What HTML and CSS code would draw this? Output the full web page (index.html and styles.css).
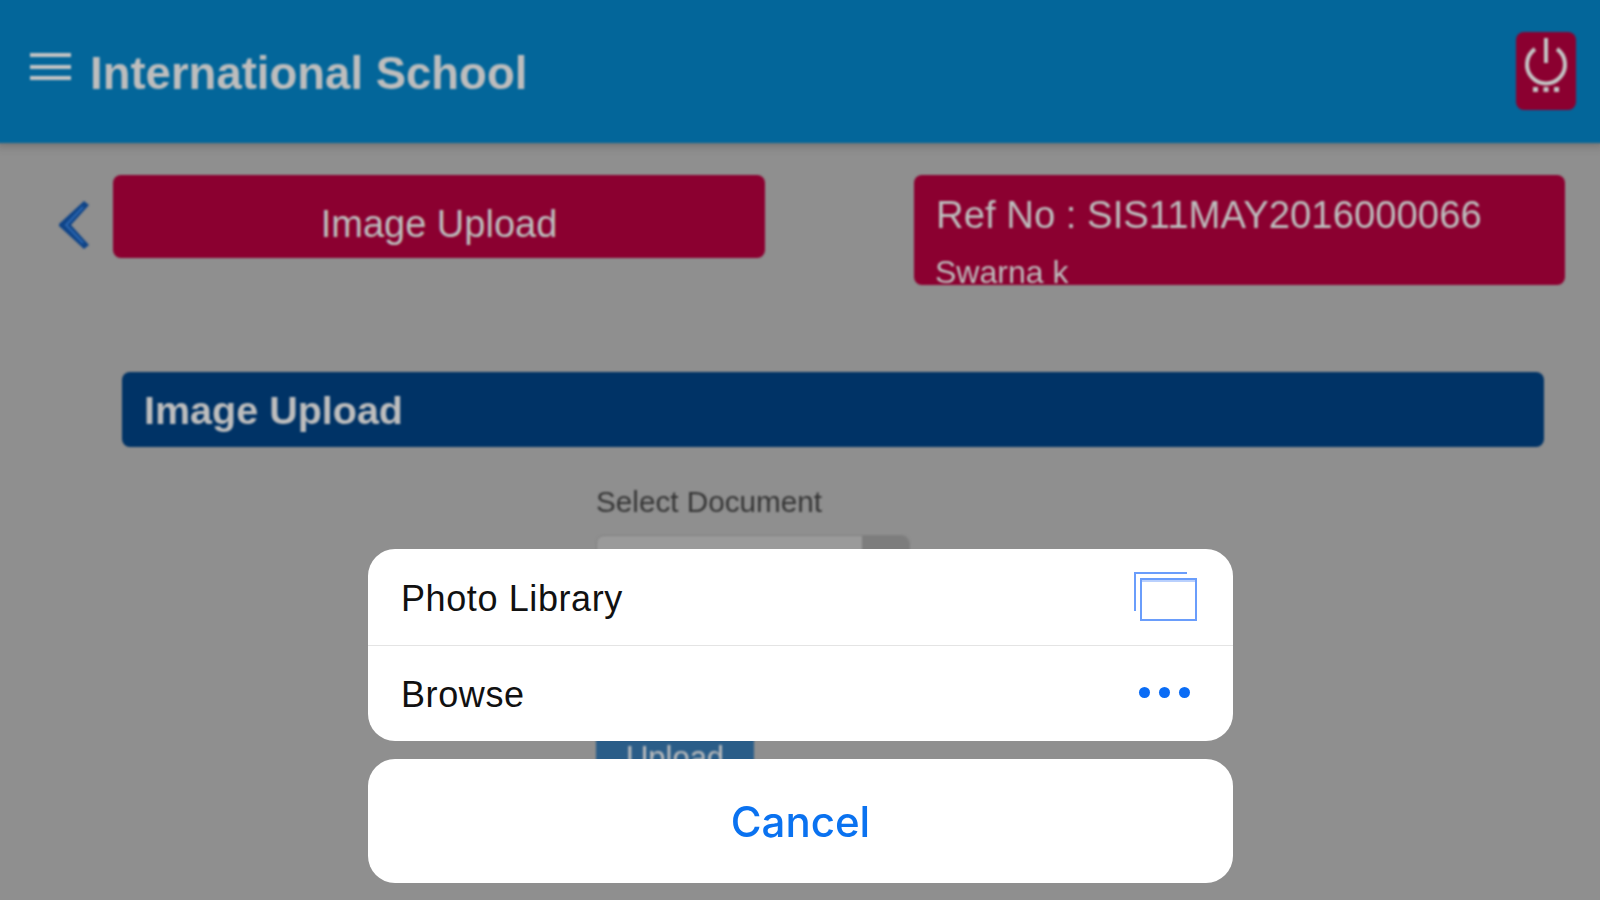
FILE: index.html
```html
<!DOCTYPE html>
<html lang="en">
<head>
  <meta charset="UTF-8">
  <title>International School</title>
  <link rel="stylesheet" href="styles.css">
</head>
<body>

  <div class="page">
    <div class="topbar">
      <div class="menu-icon"><span></span><span></span><span></span></div>
      <div class="app-title">International School</div>
      <div class="power-btn">
        <svg width="60" height="78" viewBox="0 0 60 78">
          <path d="M19 17 A19 19 0 1 0 41 17" fill="none" stroke="#c4c4c4" stroke-width="4"/>
          <path d="M30 6 V31" fill="none" stroke="#c4c4c4" stroke-width="4"/>
          <rect x="17" y="55" width="5" height="5" fill="#c4c4c4"/>
          <rect x="27.5" y="55" width="5" height="5" fill="#c4c4c4"/>
          <rect x="38" y="55" width="5" height="5" fill="#c4c4c4"/>
        </svg>
      </div>
    </div>

    <div class="info-row">
      <svg class="back-icon" width="32" height="50" viewBox="0 0 32 50">
        <path d="M26 1 L31 5 L13 25 L31 45 L26 49 L1 26 L1 24 Z" fill="#0f4488"/>
        <path d="M25 7 L8 25 L25 43" fill="none" stroke="#2c67b0" stroke-width="2"/>
      </svg>
      <div class="page-name">Image Upload</div>
      <div class="ref-box">
        <div class="ref-no">Ref No : SIS11MAY2016000066</div>
        <div class="ref-name">Swarna k</div>
      </div>
    </div>

    <div class="section-bar">Image Upload</div>

    <div class="upload-form">
      <div class="form-label">Select Document</div>
      <div class="select-box"><div class="select-arrow"></div></div>
      <div class="upload-btn">Upload</div>
    </div>
  </div>

  <div class="action-sheet">
    <div class="sheet-group">
      <div class="sheet-row">
        <span>Photo Library</span>
        <svg class="library-icon" width="64" height="52" viewBox="0 0 64 52">
          <path d="M54 3 H2 V41" fill="none" stroke="#6a9dfb" stroke-width="2"/>
          <rect x="8" y="9" width="55" height="41" fill="#fff" stroke="#6a9dfb" stroke-width="2"/>
          <path d="M9 11 H62" fill="none" stroke="#b9d0fd" stroke-width="2"/>
        </svg>
      </div>
      <div class="sheet-row">
        <span>Browse</span>
        <div class="dots"><i></i><i></i><i></i></div>
      </div>
    </div>
    <div class="sheet-cancel">Cancel</div>
  </div>

</body>
</html>
```

FILE: styles.css
```css
html,
body {
  margin: 0;
  height: 100%;
  overflow: hidden;
}

body {
  font-family: "Liberation Sans", Arial, sans-serif;
  background-color: #8f8f8f;
  position: relative;
}

.page {
  filter: blur(1px);
}

/* bleeds past the window so the blur leaves no pale edge */
.topbar {
  height: 147px;
  margin: -4px -4px 0;
  background-color: #03669a;
  display: flex;
  align-items: center;
  padding: 4px 28px 0 34px;
  box-sizing: border-box;
  box-shadow: 0 3px 8px rgba(60, 60, 60, 0.35);
}

.menu-icon {
  width: 41px;
  height: 27px;
  margin-top: -10px;
  margin-right: 19px;
  display: flex;
  flex-direction: column;
  justify-content: space-between;
}

.menu-icon span {
  height: 4px;
  background-color: #c4c4c4;
}

.app-title {
  font-size: 45.5px;
  font-weight: bold;
  color: #bdbdbd;
  flex: 1;
  padding-top: 5px;
}

.power-btn {
  width: 60px;
  height: 78px;
  margin-top: -2px;
  background-color: #8b0030;
  border-radius: 8px;
}

.power-btn svg {
  display: block;
}

.info-row {
  display: flex;
  align-items: flex-start;
  padding: 32px 35px 0 58px;
}

.back-icon {
  margin-top: 25px;
  margin-right: 23px;
  flex: none;
}

.page-name {
  width: 652px;
  height: 83px;
  line-height: 98px;
  background-color: #8b0030;
  border-radius: 8px;
  color: #bdbdbd;
  font-size: 38px;
  text-align: center;
}

.ref-box {
  width: 651px;
  height: 110px;
  margin-left: auto;
  padding: 18px 22px 0;
  box-sizing: border-box;
  overflow: hidden;
  background-color: #8b0030;
  border-radius: 8px;
  color: #bdbdbd;
}

.ref-no {
  font-size: 38.3px;
  line-height: 44px;
}

.ref-name {
  font-size: 32px;
  line-height: 36px;
  margin-top: 17px;
  margin-left: -1px;
}

.section-bar {
  margin: 87px 56px 0 122px;
  height: 75px;
  line-height: 77px;
  padding-left: 22px;
  background-color: #003366;
  border-radius: 8px;
  color: #bdbdbd;
  font-size: 39.5px;
  font-weight: bold;
}

.upload-form {
  margin: 38px 0 0 596px;
  width: 314px;
}

.form-label {
  font-size: 29.7px;
  line-height: 34px;
  color: #353535;
}

.select-box {
  margin-top: 16px;
  height: 60px;
  background-color: #9a9a9a;
  border: 1px solid #808080;
  border-radius: 8px;
  display: flex;
  justify-content: flex-end;
  overflow: hidden;
}

.select-arrow {
  width: 47px;
  background-color: #7d7d7d;
}

.upload-btn {
  margin-top: 125px;
  width: 158px;
  height: 52px;
  line-height: 72px;
  background-color: #2a5d88;
  color: #bdbdbd;
  font-size: 31px;
  text-align: center;
  overflow: hidden;
}

.action-sheet {
  position: absolute;
  left: 368px;
  top: 549px;
  width: 865px;
  filter: blur(0.6px);
}

.sheet-group {
  background-color: #fff;
  border-radius: 27px;
  overflow: hidden;
}

.sheet-row {
  height: 96px;
  display: flex;
  align-items: center;
  justify-content: space-between;
  padding: 0 36px 0 33px;
  box-sizing: border-box;
  font-size: 36px;
  letter-spacing: 0.6px;
  color: #111;
}

.sheet-row span {
  padding-top: 3px;
}

.library-icon {
  margin-top: -3px;
}

.sheet-row + .sheet-row {
  border-top: 1px solid #e4e4e4;
}

.dots {
  display: flex;
  gap: 9px;
  margin-right: 7px;
  margin-top: -2px;
}

.dots i {
  width: 11px;
  height: 11px;
  border-radius: 50%;
  background-color: #0a6cf5;
}

.sheet-cancel {
  margin-top: 18px;
  height: 124px;
  line-height: 126px;
  background-color: #fff;
  border-radius: 27px;
  color: #0a72f0;
  font-family: Inter, "Liberation Sans", sans-serif;
  font-size: 42px;
  font-weight: 500;
  text-align: center;
}
```
